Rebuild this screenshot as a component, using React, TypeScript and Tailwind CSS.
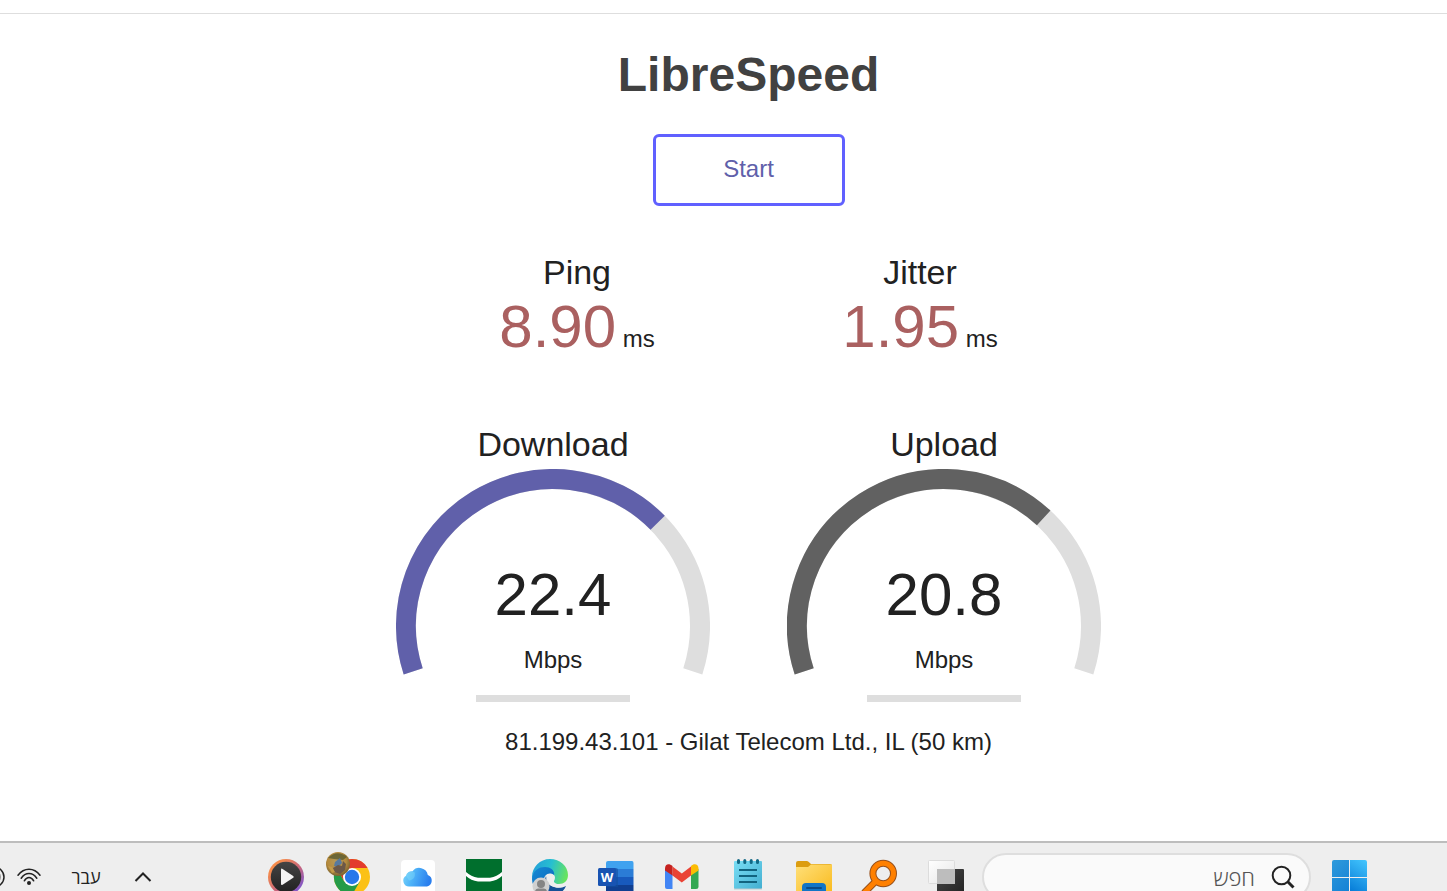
import React from "react";

const RADIUS = 147;
const CENTER = 157;
const SWEEP = 216;

function point(angle: number) {
  const rad = (angle * Math.PI) / 180;
  return `${(CENTER + RADIUS * Math.cos(rad)).toFixed(2)} ${(CENTER + RADIUS * Math.sin(rad)).toFixed(2)}`;
}

function arc(from: number, to: number) {
  const large = to - from > 180 ? 1 : 0;
  return `M${point(from)}A${RADIUS} ${RADIUS} 0 ${large} 1 ${point(to)}`;
}

function Latency({ label, value }: { label: string; value: string }) {
  return (
    <section className="flex w-[314px] flex-col items-center">
      <h2 className="text-[34px] leading-10">{label}</h2>
      <p className="mt-px text-[60px] leading-[68px] text-[#aa6060]">
        {value}
        <span className="text-2xl leading-8 text-[#212121]"> ms</span>
      </p>
    </section>
  );
}

function Gauge({ label, value, degrees, color }: { label: string; value: string; degrees: number; color: string }) {
  const start = 162;
  return (
    <section className="flex w-[314px] flex-col items-center">
      <h2 className="text-[34px] leading-10">{label}</h2>
      <div className="mt-[5px] grid w-full">
        <svg viewBox="0 0 314 206" className="col-start-1 row-start-1 w-full" fill="none" strokeWidth="20" aria-hidden="true">
          <path d={arc(start, start + SWEEP)} stroke="#dedede" />
          <path d={arc(start, start + degrees)} stroke={color} />
        </svg>
        <div className="col-start-1 row-start-1 flex flex-col items-center pt-[92px]">
          <p className="text-[60px] leading-[68px]">{value}</p>
          <p className="mt-[15px] text-2xl leading-8">Mbps</p>
          <div className="mt-[19px] h-[7px] w-[154px] bg-[#dedede]" />
        </div>
      </div>
    </section>
  );
}

function TaskbarApp({ name, children }: { name: string; children: React.ReactNode }) {
  return (
    <button type="button" aria-label={name} className="size-9 shrink-0">
      <svg viewBox="0 0 36 36" className="size-9 overflow-visible">
        {children}
      </svg>
    </button>
  );
}

function TaskbarApps() {
  return (
    <div className="flex shrink-0 gap-[30px]">
      <TaskbarApp name="Media Player">
        <defs>
          <linearGradient id="mp" x1="0" y1="0" x2="1" y2="1">
            <stop offset="0.2" stopColor="#f58b4c" />
            <stop offset="0.55" stopColor="#c8667c" />
            <stop offset="0.85" stopColor="#8257c8" />
          </linearGradient>
          <linearGradient id="mpd" x1="0" y1="0" x2="0" y2="1">
            <stop stopColor="#444" />
            <stop offset="1" stopColor="#222" />
          </linearGradient>
        </defs>
        <circle cx="18" cy="18" r="18" fill="url(#mp)" />
        <circle cx="18" cy="18" r="15.2" fill="url(#mpd)" />
        <path d="M13 10.8q0-1.8 1.6-.9l10.6 7q1.2.9 0 1.8l-10.6 7q-1.6.9-1.6-.9z" fill="#f4f4f4" />
      </TaskbarApp>
      <TaskbarApp name="Google Chrome">
        <defs>
          <radialGradient id="pic" cx="0.45" cy="0.4" r="0.65">
            <stop stopColor="#b59a5c" />
            <stop offset="0.6" stopColor="#b58a3c" />
            <stop offset="1" stopColor="#6b5a30" />
          </radialGradient>
        </defs>
        <circle cx="18" cy="18" r="18" fill="#fbc116" />
        <path d="M2.4 9A18 18 0 0 1 33.6 9H18L10.2 22.5z" fill="#e33b2e" />
        <path d="M2.4 9A18 18 0 0 0 18 36L25.8 22.5H10.2z" fill="#259b48" />
        <circle cx="18" cy="18" r="9" fill="#fff" />
        <circle cx="18" cy="18" r="7.2" fill="#2878ea" />
        <circle cx="4" cy="5" r="12" fill="url(#pic)" />
        <path d="M-6-1Q3-10 13-2L9 1 0 0z" fill="#46512e" opacity=".65" />
        <path d="M1 3l5-4 2 5-4 4-4-1z" fill="#57799f" />
        <path d="M-1 9l5-3 4 1 1-5 3 3-1 6-5 4-6-2z" fill="#6b5848" />
        <path d="M-6 7l4 1 3 5-3 1z" fill="#c49a48" />
      </TaskbarApp>
      <TaskbarApp name="iCloud">
        <defs>
          <linearGradient id="ic" x1="0" y1="0" x2="1" y2="0.2">
            <stop stopColor="#7ad6fb" />
            <stop offset="0.4" stopColor="#4fb4f8" />
            <stop offset="1" stopColor="#2a7fee" />
          </linearGradient>
        </defs>
        <rect x="1" y="1" width="34" height="34" rx="4" fill="#fff" />
        <path d="M9 27.500A5.800 5.800 0 0 1 6 16.800 5.800 5.800 0 0 1 12.500 12.300 8.600 8.600 0 0 1 27.800 16 6 6 0 0 1 27 27.500z" fill="url(#ic)" />
        <path d="M6 16.800A5.800 5.800 0 0 1 14.500 13.200C16 17 13.500 21 9 21.500z" fill="#8fe4fa" opacity=".35" />
      </TaskbarApp>
      <TaskbarApp name="Bank">
        <path d="M0 0H36V36H0z" fill="#006f2d" />
        <path d="M0 13Q5 17.500 12 18.800H24Q31 17.500 36 13V17Q31 21.500 24 22.500H12Q5 21.500 0 17z" fill="#fff" />
      </TaskbarApp>
      <TaskbarApp name="Microsoft Edge">
        <defs>
          <linearGradient id="e1" x1="0" y1="0.3" x2="1" y2="0.5">
            <stop stopColor="#249fd9" />
            <stop offset="0.5" stopColor="#27bfd0" />
            <stop offset="1" stopColor="#68e45d" />
          </linearGradient>
          <linearGradient id="e2" x1="0" y1="0" x2="0.8" y2="1">
            <stop stopColor="#1689d4" />
            <stop offset="1" stopColor="#0866bd" />
          </linearGradient>
        </defs>
        <path d="M0 18C0 8 8 0 18 0S36 7 36 16c0 6-4 9-9 9-4 0-6-1-5-3 3-5-1-9-8-9C7 12 1 16 0 22z" fill="url(#e1)" />
        <path d="M0 20C1 11 7 8 13 8c6 0 10 4 9 8-6-4-11 1-10 7 1 6 5 10 10 12C10 39 0 30 0 20z" fill="url(#e2)" />
        <path d="M14 17c-3 8 1 16 9 19 5-1 9-4 11-9-8 4-16 1-19-5z" fill="#155096" />
        <path d="M22 16c1 3-1 5 0 7 2 3 8 4 12 3l-1 1c-7 3-15 1-18-4-2-5 2-9 7-7z" fill="#eee" />
        <circle cx="9" cy="27" r="8.5" fill="#d0d0d0" />
        <circle cx="9" cy="25" r="4" fill="#858585" />
        <path d="M3 33Q3 29.500 6 29.500H12Q15 29.500 15 33z" fill="#858585" />
      </TaskbarApp>
      <TaskbarApp name="Word">
        <path d="M8 4q0-2 2-2H34q1.500 0 1.500 2V10H8z" fill="#40a2ef" />
        <path d="M8 10H35.500V18H8z" fill="#2b7cd6" />
        <path d="M8 18H35.500V26H8z" fill="#185abd" />
        <path d="M8 26H35.500V34H8z" fill="#103f91" />
        <path d="M8 9H18q2 0 2 2V28H8z" fill="#124f9f" opacity=".6" />
        <rect x="0" y="9" width="18" height="18" rx="1.5" fill="#1853b2" />
        <text x="9" y="23" textAnchor="middle" fontSize="13" fontWeight="700" fontFamily="Open Sans, sans-serif" fill="#fff">
          W
        </text>
      </TaskbarApp>
      <TaskbarApp name="Gmail">
        <path d="M1 10L8.500 15V30H3Q1 30 1 28z" fill="#4285f4" />
        <path d="M27 15L34.500 10V28Q34.500 30 32 30H27z" fill="#34a853" />
        <path d="M8.500 7.500L17.800 14.500 27 7.500V16.500L17.800 23.500 8.500 16.500z" fill="#ea4335" />
        <path d="M1 9.500C1 5 5 4 8.500 7V16.500L1 11.500z" fill="#c5221f" />
        <path d="M27 7C30 4 34.500 5 34.500 9.500V11.500L27 16.500z" fill="#fbbc04" />
      </TaskbarApp>
      <TaskbarApp name="Notepad">
        <defs>
          <linearGradient id="np" x1="0" y1="0" x2="1" y2="1">
            <stop stopColor="#79def5" />
            <stop offset="1" stopColor="#43aed0" />
          </linearGradient>
        </defs>
        <rect x="4" y="2" width="28" height="28" rx="1" fill="url(#np)" />
        <path d="M4 30H32" stroke="#bccbd0" />
        <path d="M8.500 1.500v2M14.800 1.500v2M21.200 1.500v2M27.500 1.500v2" stroke="#126885" strokeWidth="3" strokeLinecap="round" />
        <path d="M9 11H27M9 17H27M9 23H27" stroke="#11637f" strokeWidth="2" />
      </TaskbarApp>
      <TaskbarApp name="File Explorer">
        <defs>
          <linearGradient id="fe" x1="0" y1="0" x2="1" y2="1">
            <stop stopColor="#ffe07a" />
            <stop offset="1" stopColor="#f9b91b" />
          </linearGradient>
        </defs>
        <path d="M0 4Q0 2 2 2H11Q12 2 15 5H34Q36 5 36 7V15H0z" fill="#dc9d10" />
        <path d="M0 8H12L15 5.500H36V36H0z" fill="url(#fe)" />
        <path d="M6 36V28Q6 24 10 24H26Q30 24 30 28V36z" fill="#1275c6" />
        <path d="M11 29H25" stroke="#0b4b88" strokeWidth="2" strokeLinecap="round" />
      </TaskbarApp>
      <TaskbarApp name="Everything">
        <circle cx="21.2" cy="14.5" r="10.3" fill="none" stroke="#96501c" strokeWidth="7" />
        <path d="M14 22L2 34" stroke="#96501c" strokeWidth="7" />
        <circle cx="21.2" cy="14.5" r="10.3" fill="none" stroke="#ff8000" strokeWidth="5" />
        <path d="M14 22L1 35" stroke="#ff8000" strokeWidth="5" />
      </TaskbarApp>
      <TaskbarApp name="Task View">
        <defs>
          <linearGradient id="tv" x1="0" y1="0" x2="1" y2="1">
            <stop stopColor="#484848" />
            <stop offset="1" stopColor="#222" />
          </linearGradient>
          <linearGradient id="tw" x1="0" y1="0" x2="1" y2="1">
            <stop stopColor="#fff" />
            <stop offset="1" stopColor="#e6e6e6" />
          </linearGradient>
        </defs>
        <rect x="9" y="10" width="27" height="26" rx="1" fill="url(#tv)" />
        <rect x="0.5" y="1.5" width="26" height="23" rx="1" fill="url(#tw)" stroke="#dcdcdc" />
        <path d="M9 10H27V25H9z" fill="#bdbdbd" />
      </TaskbarApp>
    </div>
  );
}

function Taskbar() {
  return (
    <footer className="h-[50px] shrink-0 overflow-hidden border-t-2 border-[#bdbdbd] bg-[#eee] font-['Open_Sans','Noto_Sans',sans-serif]">
      <div className="flex h-[68px] items-center pr-20">
        <div className="flex w-[268px] shrink-0 items-center">
          <svg viewBox="0 0 5 24" className="h-6 w-[5px] shrink-0" fill="none" aria-hidden="true">
            <circle cx="-6" cy="12" r="10" stroke="#222" strokeWidth="1.5" />
            <circle cx="-6" cy="12" r="6.5" stroke="#999" strokeWidth="1" />
          </svg>
          <svg viewBox="0 0 24 18" className="ml-3 h-[18px] w-6 shrink-0" fill="none" stroke="#222" strokeWidth="1.5" strokeLinecap="round" aria-hidden="true">
            <path d="M1 7.200C7-.9 17-.9 23 7.200M4.200 10.200C8.500 4 15.500 4 19.800 10.200M7.300 12.800C10 8.300 14 8.300 16.700 12.800" />
            <circle cx="12" cy="15" r="2" fill="#222" stroke="none" />
          </svg>
          <button type="button" lang="he" className="ml-[29px] w-8 text-lg leading-6 text-[#222]">
            עבר
          </button>
          <button type="button" aria-label="Show hidden icons" className="ml-8">
            <svg viewBox="0 0 18 12" className="h-3 w-[18px]" fill="none" stroke="#222" strokeWidth="2">
              <path d="M1.500 10L9 2.500 16.500 10" />
            </svg>
          </button>
        </div>
        <TaskbarApps />
        <label className="ml-[18px] flex h-12 min-w-0 flex-1 items-center gap-4 rounded-full border-2 border-[#dedede] bg-[#fafafa] pr-3.5 pl-6">
          <input
            type="text"
            dir="rtl"
            lang="he"
            aria-label="חפש"
            placeholder="חפש"
            className="min-w-0 flex-1 bg-transparent text-[22px] leading-8 font-light outline-none placeholder:text-[#555]"
          />
          <svg viewBox="0 0 24 24" className="size-6 shrink-0" fill="none" stroke="#222" aria-hidden="true">
            <circle cx="10.5" cy="10.5" r="8.8" strokeWidth="2" />
            <path d="M16.800 16.800L22.500 22.500" strokeWidth="3" />
          </svg>
        </label>
        <button type="button" aria-label="Start menu" className="ml-[21px] shrink-0">
          <svg viewBox="0 0 35 36" className="h-9 w-[35px]">
            <defs>
              <linearGradient id="win" x1="0" y1="0" x2="35" y2="36" gradientUnits="userSpaceOnUse">
                <stop stopColor="#2f9bdc" />
                <stop offset="1" stopColor="#0876d2" />
              </linearGradient>
              <linearGradient id="win2" x1="35" y1="0" x2="15" y2="30" gradientUnits="userSpaceOnUse">
                <stop stopColor="#45c8ff" />
                <stop offset="1" stopColor="#067bd7" />
              </linearGradient>
            </defs>
            <path d="M0 3Q0 1 2 1H17V18H0zM0 19H17V36H2Q0 36 0 34z" fill="url(#win)" />
            <path d="M18 1H33Q35 1 35 3V18H18zM18 19H35V34Q35 36 33 36H18z" fill="url(#win2)" />
          </svg>
        </button>
      </div>
    </footer>
  );
}

export default function App() {
  return (
    <div className="flex min-h-screen flex-col bg-white font-['Liberation_Sans',Arial,sans-serif] text-[#212121]">
      <div className="h-3.5 shrink-0 border-b border-[#dedede]" />
      <main className="flex flex-1 flex-col items-center pt-[33px] pb-8 pl-[50px]">
        <h1 className="text-5xl leading-[56px] font-bold text-[#414141]">LibreSpeed</h1>
        <button
          type="button"
          className="mt-[31px] h-[72px] w-48 rounded-md border-3 border-[#6060ff] pb-0.5 text-2xl text-[#6060aa]"
        >
          Start
        </button>
        <div className="mt-[46px] flex flex-wrap justify-center gap-x-[29px]">
          <Latency label="Ping" value="8.90" />
          <Latency label="Jitter" value="1.95" />
        </div>
        <div className="mt-[63px] flex flex-wrap justify-center gap-x-[77px]">
          <Gauge label="Download" value="22.4" degrees={153.4} color="#6060aa" />
          <Gauge label="Upload" value="20.8" degrees={150.7} color="#616161" />
        </div>
        <p className="mt-6 text-2xl leading-8">81.199.43.101 - Gilat Telecom Ltd., IL (50 km)</p>
      </main>
      <Taskbar />
    </div>
  );
}
